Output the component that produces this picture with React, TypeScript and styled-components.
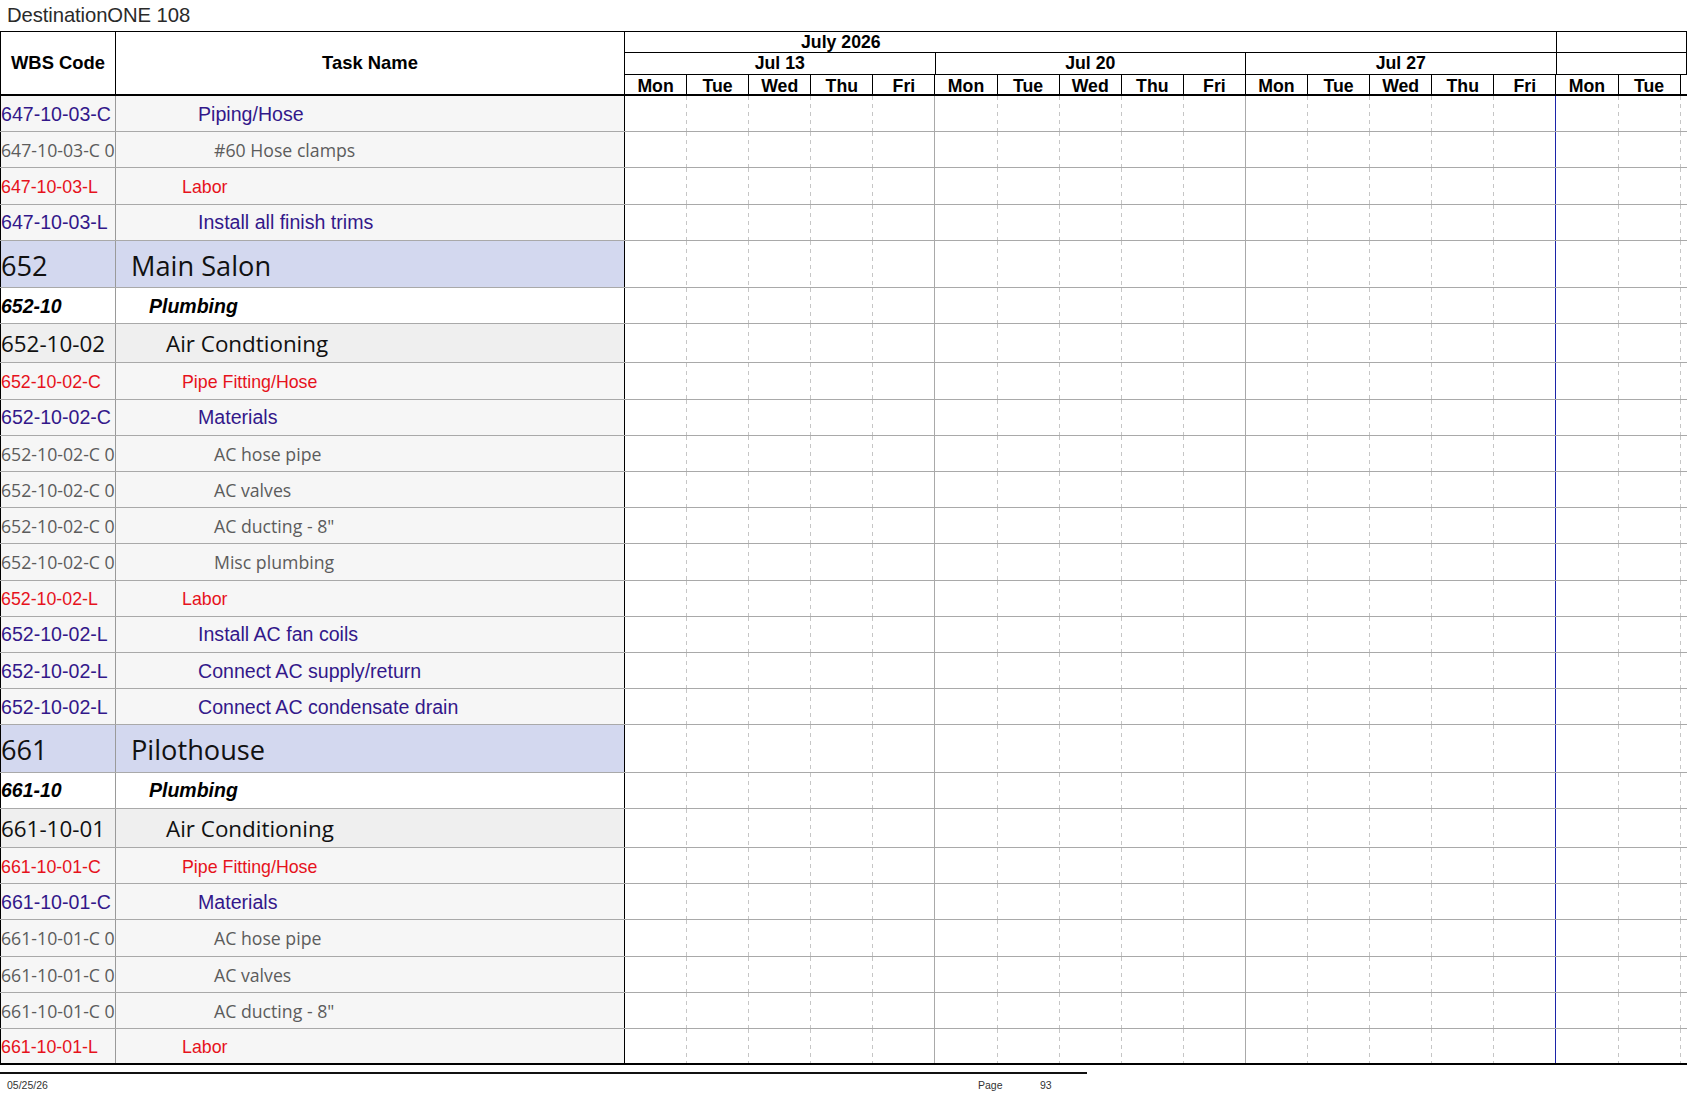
import React from 'react';
import styled, { createGlobalStyle, css } from 'styled-components';

const GlobalStyle = createGlobalStyle`
  html, body { margin: 0; padding: 0; background: #fff; }
  body { font-family: "Liberation Sans", Arial, sans-serif; }
  * { box-sizing: border-box; }
`;

const DAY = 62.1;
const DAYS = ['Mon', 'Tue', 'Wed', 'Thu', 'Fri', 'Mon', 'Tue', 'Wed', 'Thu', 'Fri', 'Mon', 'Tue', 'Wed', 'Thu', 'Fri', 'Mon', 'Tue'];
const WEEKS = ['Jul 13', 'Jul 20', 'Jul 27'];

type Kind = 'purple' | 'gray' | 'red' | 'section' | 'group' | 'sub';

const ARIAL = `"Liberation Sans", Arial, sans-serif`;
const HUMAN = `"Open Sans", "Noto Sans", sans-serif`;

const KINDS: Record<Kind, { font: string; color: string; bg: string; indent: number; h: number; pad: number }> = {
  purple: { font: `400 19.6px ${ARIAL}`, color: '#33188a', bg: '#f6f6f6', indent: 82, h: 36.2, pad: 1 },
  gray: { font: `400 17.7px ${HUMAN}`, color: '#5c5c5c', bg: '#f6f6f6', indent: 98, h: 36.2, pad: 1 },
  red: { font: `400 17.8px ${ARIAL}`, color: '#e6121c', bg: '#f6f6f6', indent: 66, h: 36.2, pad: 3 },
  section: { font: `400 27.2px ${HUMAN}`, color: '#111', bg: '#d3d8ef', indent: 15, h: 47.5, pad: 2 },
  group: { font: `italic 700 19.5px ${ARIAL}`, color: '#000', bg: '#ffffff', indent: 33, h: 36.2, pad: 1 },
  sub: { font: `400 22.4px ${HUMAN}`, color: '#111', bg: '#efefef', indent: 50, h: 39, pad: 1 },
};

const ROWS: [Kind, string, string][] = [
  ['purple', '647-10-03-C', 'Piping/Hose'],
  ['gray', '647-10-03-C 0', '#60 Hose clamps'],
  ['red', '647-10-03-L', 'Labor'],
  ['purple', '647-10-03-L', 'Install all finish trims'],
  ['section', '652', 'Main Salon'],
  ['group', '652-10', 'Plumbing'],
  ['sub', '652-10-02', 'Air Condtioning'],
  ['red', '652-10-02-C', 'Pipe Fitting/Hose'],
  ['purple', '652-10-02-C', 'Materials'],
  ['gray', '652-10-02-C 0', 'AC hose pipe'],
  ['gray', '652-10-02-C 0', 'AC valves'],
  ['gray', '652-10-02-C 0', 'AC ducting - 8"'],
  ['gray', '652-10-02-C 0', 'Misc plumbing'],
  ['red', '652-10-02-L', 'Labor'],
  ['purple', '652-10-02-L', 'Install AC fan coils'],
  ['purple', '652-10-02-L', 'Connect AC supply/return'],
  ['purple', '652-10-02-L', 'Connect AC condensate drain'],
  ['section', '661', 'Pilothouse'],
  ['group', '661-10', 'Plumbing'],
  ['sub', '661-10-01', 'Air Conditioning'],
  ['red', '661-10-01-C', 'Pipe Fitting/Hose'],
  ['purple', '661-10-01-C', 'Materials'],
  ['gray', '661-10-01-C 0', 'AC hose pipe'],
  ['gray', '661-10-01-C 0', 'AC valves'],
  ['gray', '661-10-01-C 0', 'AC ducting - 8"'],
  ['red', '661-10-01-L', 'Labor'],
];

const Page = styled.div`
  width: 1687px;
  height: 1097px;
  overflow: hidden;
  background: #fff;
`;

const Title = styled.div`
  height: 31px;
  line-height: 31px;
  padding-left: 7px;
  font-family: ${ARIAL};
  font-size: 20.3px;
  color: #2a2a2a;
  letter-spacing: -0.1px;
  white-space: nowrap;
`;

const Header = styled.div`
  display: flex;
  height: 65px;
  border-top: 1px solid #000;
  border-bottom: 2px solid #000;
`;

const HeadLabel = styled.div<{ $w: number; $first?: boolean }>`
  flex: 0 0 ${(p) => p.$w}px;
  display: flex;
  align-items: center;
  justify-content: center;
  border-right: 1px solid #000;
  ${(p) => p.$first && css`border-left: 1px solid #000;`}
  font: 700 18.4px ${ARIAL};
  color: #000;
`;

const TimeHead = styled.div`
  flex: 1;
  display: flex;
  flex-direction: column;
  min-width: 0;
`;

const HeadBand = styled.div<{ $h: number; $line?: boolean; $drop?: number }>`
  display: flex;
  height: ${(p) => p.$h}px;
  padding-top: ${(p) => p.$drop || 0}px;
  ${(p) => p.$line && css`border-bottom: 1px solid #000;`}
`;

const HeadCell = styled.div<{ $w?: number; $pad?: number; $align?: string }>`
  ${(p) => (p.$w ? css`flex: 0 0 ${p.$w}px;` : css`flex: 1;`)}
  border-right: 1px solid #000;
  font: 700 17.7px ${ARIAL};
  color: #000;
  padding-left: ${(p) => p.$pad || 0}px;
  display: flex;
  align-items: center;
  justify-content: ${(p) => (p.$align === 'left' ? 'flex-start' : 'center')};
  white-space: nowrap;
  overflow: hidden;
`;

const DayHead = styled.div`
  flex: 0 0 ${DAY}px;
  border-right: 1px solid #000;
  font: 700 17.7px ${ARIAL};
  color: #000;
  display: flex;
  align-items: center;
  justify-content: center;
  padding-top: 3px;
  white-space: nowrap;
  overflow: hidden;
`;

const Body = styled.div`
  display: flex;
  flex-direction: column;
`;

const Row = styled.div<{ $h: number; $last?: boolean }>`
  display: flex;
  height: ${(p) => p.$h}px;
  border-bottom: ${(p) => (p.$last ? '2px solid #000' : '1px solid #a9a9a9')};
`;

const kindText = (k: Kind) => css`
  font: ${KINDS[k].font};
  color: ${KINDS[k].color};
  background: ${KINDS[k].bg};
  padding-top: ${KINDS[k].pad}px;
`;

const WbsCell = styled.div<{ $kind: Kind }>`
  flex: 0 0 116px;
  display: flex;
  align-items: center;
  border-left: 1px solid #000;
  border-right: 1px solid #9a9a9a;
  white-space: nowrap;
  overflow: hidden;
  ${(p) => kindText(p.$kind)}
`;

const TaskCell = styled.div<{ $kind: Kind }>`
  flex: 0 0 509px;
  display: flex;
  align-items: center;
  border-right: 1px solid #000;
  white-space: nowrap;
  overflow: hidden;
  padding-left: ${(p) => KINDS[p.$kind].indent}px;
  ${(p) => kindText(p.$kind)}
`;

const Chart = styled.div`
  flex: 1;
  display: flex;
  background: #fff;
  min-width: 0;
`;

type Line = 'dash' | 'week' | 'today';

const DayCell = styled.div<{ $line: Line }>`
  flex: 0 0 ${DAY}px;
  ${(p) =>
    p.$line === 'dash'
      ? css`
          background-image: linear-gradient(to bottom, #c6c6c6 55%, transparent 55%);
          background-size: 1px 8px;
          background-repeat: repeat-y;
          background-position: right top;
        `
      : p.$line === 'week'
      ? css`border-right: 1px solid #a9a9a9;`
      : css`border-right: 1px solid #1c24a8;`}
`;

const Filler = styled.div`
  flex: 1;
`;

const FooterLine = styled.div`
  width: 1087px;
  margin-top: 7px;
  border-top: 2px solid #111;
`;

const Footer = styled.div`
  display: grid;
  grid-template-columns: 978px 62px auto;
  height: 22px;
  align-items: center;
  font: 400 10.5px ${ARIAL};
  color: #333;
`;

const FootDate = styled.span`
  padding-left: 7px;
`;

const lineFor = (i: number): Line => (i === 14 ? 'today' : (i + 1) % 5 === 0 ? 'week' : 'dash');

export default function App() {
  return (
    <Page>
      <GlobalStyle />
      <Title>DestinationONE 108</Title>
      <Header>
        <HeadLabel $w={116} $first>WBS Code</HeadLabel>
        <HeadLabel $w={509}>Task Name</HeadLabel>
        <TimeHead>
          <HeadBand $h={21} $line>
            <HeadCell $w={DAY * 15} $align="left" $pad={176}>July 2026</HeadCell>
            <HeadCell />
          </HeadBand>
          <HeadBand $h={22} $line>
            {WEEKS.map((w) => (
              <HeadCell key={w} $w={DAY * 5}>{w}</HeadCell>
            ))}
            <HeadCell />
          </HeadBand>
          <HeadBand $h={19}>
            {DAYS.map((d, i) => (
              <DayHead key={i}>{d}</DayHead>
            ))}
            <Filler />
          </HeadBand>
        </TimeHead>
      </Header>
      <Body>
        {ROWS.map(([kind, code, name], r) => (
          <Row key={r} $h={KINDS[kind].h} $last={r === ROWS.length - 1}>
            <WbsCell $kind={kind}>{code}</WbsCell>
            <TaskCell $kind={kind}>{name}</TaskCell>
            <Chart>
              {DAYS.map((_, i) => (
                <DayCell key={i} $line={lineFor(i)} />
              ))}
              <Filler />
            </Chart>
          </Row>
        ))}
      </Body>
      <FooterLine />
      <Footer>
        <FootDate>05/25/26</FootDate>
        <span>Page</span>
        <span>93</span>
      </Footer>
    </Page>
  );
}
